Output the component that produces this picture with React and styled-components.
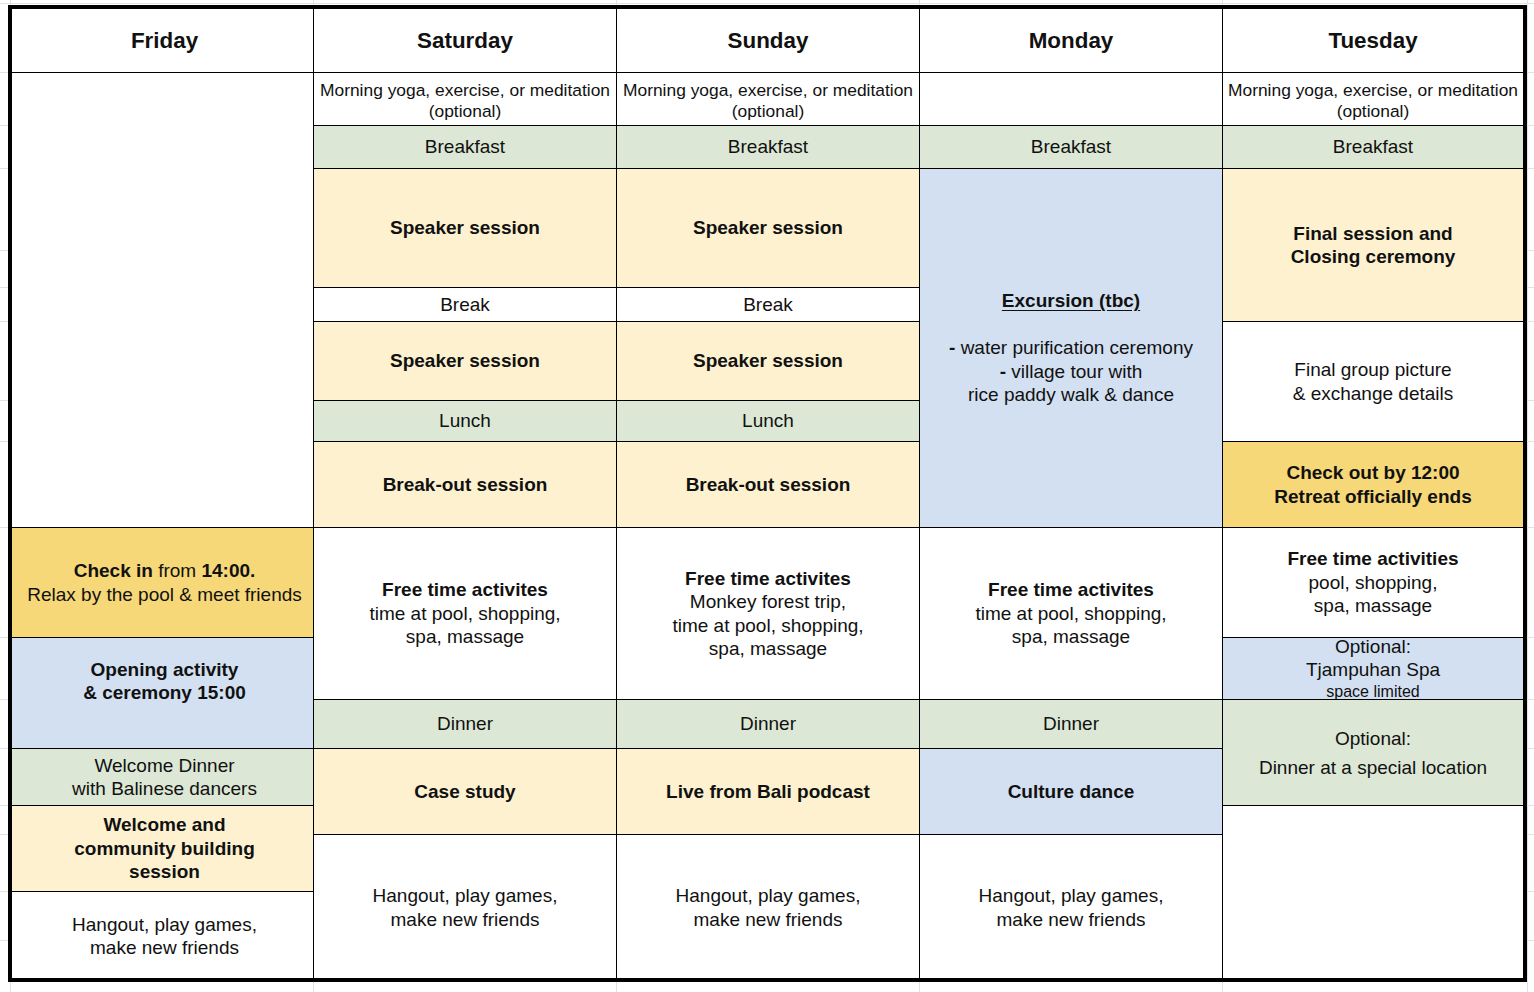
import React from "react"
import styled, { createGlobalStyle } from "styled-components"

const GREEN = "#dce8d5"
const YELLOW = "#fdf1d0"
const BLUE = "#d3e0f1"
const GOLD = "#f7d878"
const WHITE = "#ffffff"

const ROWS = [63, 52, 42, 118, 33, 78, 40, 85, 109, 61, 48, 56, 28, 56, 86]
const COLS = [301, 302, 302, 302, 300]

// faint spreadsheet gridlines peeking out around the table
const H_LINES = [3, 72, 125, 168, 250, 287, 321, 400, 441, 527, 637, 699, 748, 805, 834, 891, 940]
const V_LINES = [10, 313, 616, 919, 1222, 1527]
const gridLine = "linear-gradient(#e2e2e2, #e2e2e2)"
const sheetLines = [
  ...H_LINES.map((y) => `${gridLine} 0 ${y}px / 100% 1px no-repeat`),
  ...V_LINES.map((x) => `${gridLine} ${x}px 0 / 1px 100% no-repeat`),
].join(", ")

const GlobalStyle = createGlobalStyle`
  html, body {
    margin: 0;
    padding: 0;
    background: #fff;
  }
  body {
    font-family: "Liberation Sans", Arial, sans-serif;
    color: #111;
  }
`

const Sheet = styled.div`
  width: 1534px;
  height: 992px;
  box-sizing: border-box;
  padding: 5px 0 0 8px;
  background: ${sheetLines};
  background-color: #fff;
  overflow: hidden;
`

const Table = styled.div`
  display: grid;
  width: 1519px;
  box-sizing: border-box;
  grid-template-columns: ${COLS.map((c) => `${c}px`).join(" ")};
  grid-template-rows: ${ROWS.map((r) => `${r}px`).join(" ")};
  gap: 1px;
  border: 4px solid #000;
  background: #000;
`

const Cell = styled.div`
  grid-column: ${({ $col }) => $col};
  grid-row: ${({ $row }) => $row};
  display: flex;
  flex-direction: column;
  align-items: center;
  justify-content: center;
  box-sizing: border-box;
  overflow: hidden;
  text-align: center;
  background: ${({ $bg }) => $bg || WHITE};
  font-size: ${({ $size }) => $size || 19}px;
  line-height: ${({ $lh }) => $lh || 23.5}px;
  font-weight: ${({ $bold }) => ($bold ? 700 : 400)};
  white-space: nowrap;
  padding-left: ${({ $col }) => (String($col) === "1" ? 4 : 0)}px;
  padding-top: ${({ $top }) => $top || 0}px;
`

const DayHeader = styled(Cell)`
  font-size: 22.4px;
  font-weight: 700;
`

const B = styled.b`
  font-weight: 700;
`

const Title = styled.span`
  font-weight: 700;
  text-decoration: underline;
  text-underline-offset: 3px;
`

const Small = styled.span`
  font-size: 16px;
  line-height: 22px;
`

const Blank = styled.span`
  display: block;
  height: 23.5px;
`

const days = ["Friday", "Saturday", "Sunday", "Monday", "Tuesday"]

const Morning = ({ col }) => (
  <Cell $col={col} $row="2" $size={17.4} $lh={21} $top={4}>
    <span>Morning yoga, exercise, or meditation</span>
    <span>(optional)</span>
  </Cell>
)

const Hangout = ({ col, row }) => (
  <Cell $col={col} $row={row} $top={2}>
    <span>Hangout, play games,</span>
    <span>make new friends</span>
  </Cell>
)

const ConferenceDay = ({ col, evening }) => (
  <>
    <Morning col={col} />
    <Cell $col={col} $row="3" $bg={GREEN}>Breakfast</Cell>
    <Cell $col={col} $row="4" $bg={YELLOW} $bold>Speaker session</Cell>
    <Cell $col={col} $row="5">Break</Cell>
    <Cell $col={col} $row="6" $bg={YELLOW} $bold>Speaker session</Cell>
    <Cell $col={col} $row="7" $bg={GREEN}>Lunch</Cell>
    <Cell $col={col} $row="8" $bg={YELLOW} $bold>Break-out session</Cell>
    <Cell $col={col} $row="11" $bg={GREEN}>Dinner</Cell>
    <Cell $col={col} $row="12 / 14" $bg={YELLOW} $bold>{evening}</Cell>
    <Hangout col={col} row="14 / 16" />
  </>
)

const App = () => (
  <Sheet>
    <GlobalStyle />
    <Table>
      {days.map((day, i) => (
        <DayHeader key={day} $col={i + 1} $row="1">
          {day}
        </DayHeader>
      ))}

      {/* Friday */}
      <Cell $col="1" $row="2 / 9" />
      <Cell $col="1" $row="9" $bg={GOLD}>
        <span>
          <B>Check in</B> from <B>14:00.</B>
        </span>
        <span>Relax by the pool &amp; meet friends</span>
      </Cell>
      <Cell $col="1" $row="10 / 12" $bg={BLUE} $bold>
        <span>Opening activity</span>
        <span>&amp; ceremony 15:00</span>
        <Blank />
      </Cell>
      <Cell $col="1" $row="12" $bg={GREEN}>
        <span>Welcome Dinner</span>
        <span>with Balinese dancers</span>
      </Cell>
      <Cell $col="1" $row="13 / 15" $bg={YELLOW} $bold>
        <span>Welcome and</span>
        <span>community building</span>
        <span>session</span>
      </Cell>
      <Hangout col="1" row="15" />

      {/* Saturday */}
      <ConferenceDay col="2" evening="Case study" />
      <Cell $col="2" $row="9 / 11">
        <B>Free time activites</B>
        <span>time at pool, shopping,</span>
        <span>spa, massage</span>
      </Cell>

      {/* Sunday */}
      <ConferenceDay col="3" evening="Live from Bali podcast" />
      <Cell $col="3" $row="9 / 11">
        <B>Free time activites</B>
        <span>Monkey forest trip,</span>
        <span>time at pool, shopping,</span>
        <span>spa, massage</span>
      </Cell>

      {/* Monday */}
      <Cell $col="4" $row="2" />
      <Cell $col="4" $row="3" $bg={GREEN}>Breakfast</Cell>
      <Cell $col="4" $row="4 / 9" $bg={BLUE}>
        <Title>Excursion (tbc)</Title>
        <Blank />
        <span>
          <B>-</B> water purification ceremony
        </span>
        <span>
          <B>-</B> village tour with
        </span>
        <span>rice paddy walk &amp; dance</span>
      </Cell>
      <Cell $col="4" $row="9 / 11">
        <B>Free time activites</B>
        <span>time at pool, shopping,</span>
        <span>spa, massage</span>
      </Cell>
      <Cell $col="4" $row="11" $bg={GREEN}>Dinner</Cell>
      <Cell $col="4" $row="12 / 14" $bg={BLUE} $bold>Culture dance</Cell>
      <Hangout col="4" row="14 / 16" />

      {/* Tuesday */}
      <Morning col="5" />
      <Cell $col="5" $row="3" $bg={GREEN}>Breakfast</Cell>
      <Cell $col="5" $row="4 / 6" $bg={YELLOW} $bold>
        <span>Final session and</span>
        <span>Closing ceremony</span>
      </Cell>
      <Cell $col="5" $row="6 / 8">
        <span>Final group picture</span>
        <span>&amp; exchange details</span>
      </Cell>
      <Cell $col="5" $row="8" $bg={GOLD} $bold>
        <span>Check out by 12:00</span>
        <span>Retreat officially ends</span>
      </Cell>
      <Cell $col="5" $row="9">
        <B>Free time activities</B>
        <span>pool, shopping,</span>
        <span>spa, massage</span>
      </Cell>
      <Cell $col="5" $row="10" $bg={BLUE} $lh={23}>
        <span>Optional:</span>
        <span>Tjampuhan Spa</span>
        <Small>space limited</Small>
      </Cell>
      <Cell $col="5" $row="11 / 13" $bg={GREEN} $lh={29}>
        <span>Optional:</span>
        <span>Dinner at a special location</span>
      </Cell>
      <Cell $col="5" $row="13 / 16" />
    </Table>
  </Sheet>
)

export default App
